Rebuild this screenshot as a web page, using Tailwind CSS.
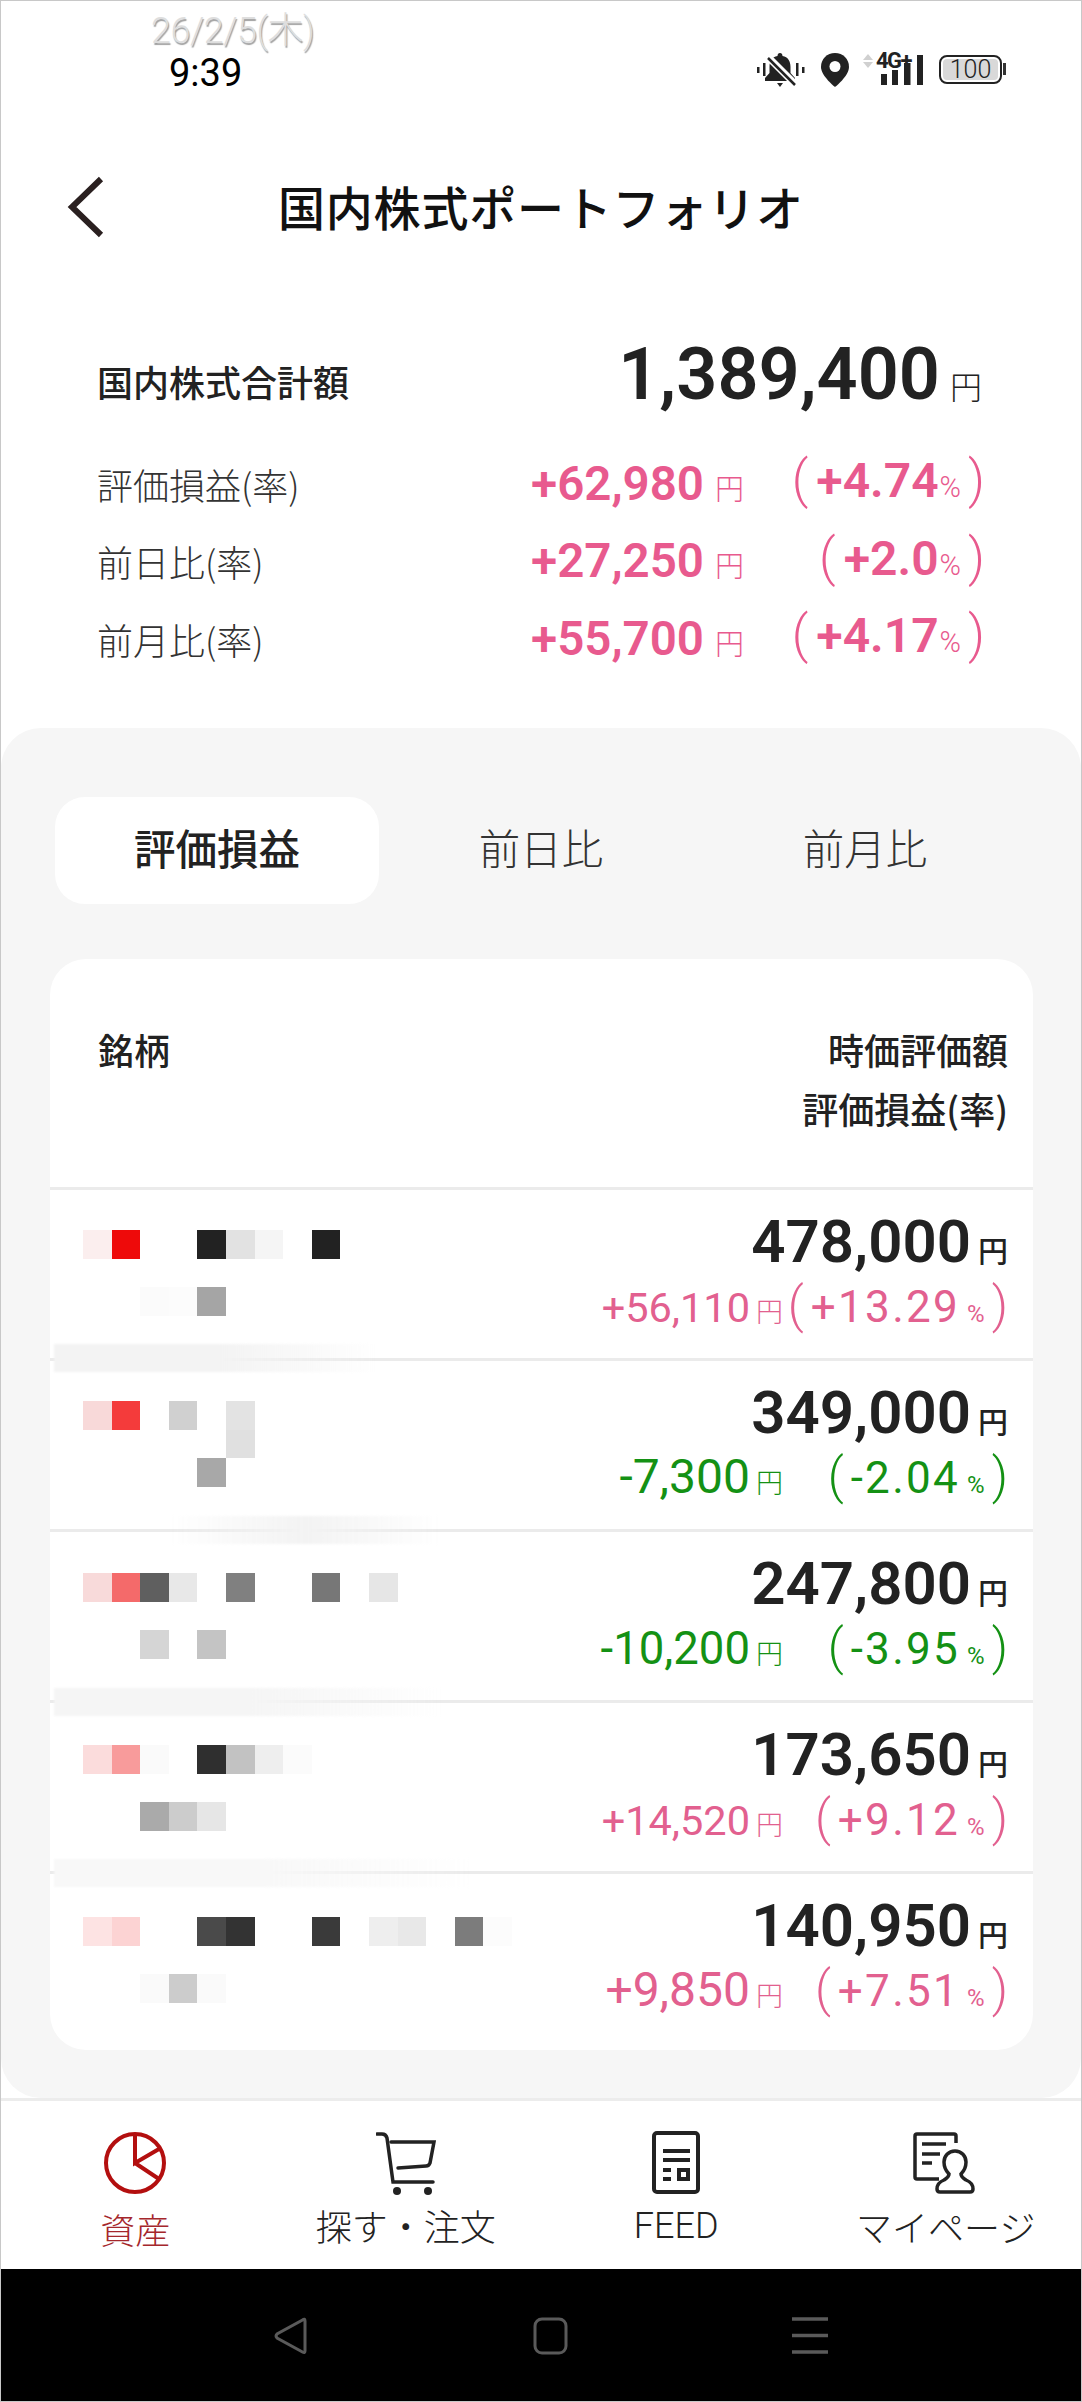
<!DOCTYPE html>
<html lang="ja">
<head>
<meta charset="utf-8">
<script src="https://cdn.jsdelivr.net/npm/@tailwindcss/browser@4"></script>
</head>
<body class="bg-white">
<div class="relative w-[1082px] h-[2402px] overflow-hidden bg-white flex flex-col font-['Roboto','Noto_Sans_CJK_JP',sans-serif] text-[#222]">

  <!-- status bar -->
  <div class="h-[150px] flex justify-between shrink-0">
    <div class="pl-[151px] pt-[9px] flex flex-col">
      <span class="text-[36px] leading-[44px] font-light tracking-[-0.5px] text-[#dedede] [text-shadow:1px_2px_1px_#a0a0a0]">26/2/5(木)</span>
      <span class="pl-[18px] text-[38px] leading-[40px] text-black">9:39</span>
    </div>
    <div class="flex items-start pt-[53px] pr-[76px]">
      <svg width="48" height="34" viewBox="0 0 48 34" fill="#222"><path d="M23 0c-1.500 0-2.500 1-2.500 3C15 4 12.500 8 12.500 14v6L8 25v3h30v-3l-4.500-5v-6c0-6-2.500-10-8-11 0-2-1-3-2.500-3z"/><path d="M20 30h6l-3 4z"/><rect x="0" y="14" width="2.500" height="6"/><rect x="6" y="10" width="2.500" height="13"/><rect x="39" y="10" width="2.500" height="13"/><rect x="45" y="14" width="2.500" height="6"/><path d="M11 4l27 27" stroke="#fff" stroke-width="7"/><path d="M11 5l27 27" stroke="#222" stroke-width="2.500"/></svg>
      <svg class="ml-[16px]" width="28" height="34" viewBox="0 0 28 34"><path fill="#222" d="M14 0C6 0 0 6 0 14c0 9 14 20 14 20s14-11 14-20C28 6 22 0 14 0z"/><circle cx="14" cy="13.500" r="5.500" fill="#fff"/></svg>
      <div class="relative ml-[14px] w-[60px] h-[34px]">
        <svg class="absolute left-0 top-0" width="60" height="34" viewBox="0 0 60 34" fill="#222"><path d="M5 1l5 6H0z" fill="#d0d0d0"/><path d="M5 15l5-6H0z" fill="#d0d0d0"/><rect x="18" y="21" width="6" height="11"/><rect x="29" y="17" width="6" height="15"/><rect x="41" y="10" width="6.500" height="22"/><rect x="54" y="2" width="6" height="30"/></svg>
        <span class="absolute left-[13px] top-[-4px] text-[22px] leading-[24px] font-bold tracking-[-1.5px]">4G+</span>
      </div>
      <div class="ml-[16px] mt-[2px] w-[63px] h-[29px] rounded-[8px] border-[2.5px] border-[#222] p-[2px] box-border">
        <div class="h-full rounded-[4px] bg-[#d9d9d9] flex items-center justify-center text-[25px] leading-none font-light">100</div>
      </div>
      <div class="ml-[1px] mt-[10px] w-[3px] h-[12px] bg-[#333]"></div>
    </div>
  </div>

  <!-- header -->
  <div class="h-[120px] shrink-0 relative flex items-center pl-[278px] pb-[8px]">
    <svg class="absolute left-[66px] top-[26px]" width="38" height="62" viewBox="0 0 38 62" fill="none" stroke="#2a2020" stroke-width="6"><path d="M35 3L6 31l29 28"/></svg>
    <h1 class="text-[47px] leading-[60px] font-medium text-[#111] tracking-[0.8px] font-['Noto_Sans_CJK_JP',sans-serif]">国内株式ポートフォリオ</h1>
  </div>

  <!-- summary -->
  <div class="h-[458px] shrink-0 pl-[97px] pr-[100px] pt-[65px]">
    <div class="flex justify-between items-center h-[80px]">
      <span class="mt-[11px] text-[36px] font-medium font-['Noto_Sans_CJK_JP',sans-serif]">国内株式合計額</span>
      <span class="flex items-baseline">
        <span class="text-[72px] leading-[80px] font-semibold">1,389,400</span>
        <span class="ml-[10px] text-[32px] font-['Noto_Sans_CJK_JP',sans-serif] font-light">円</span>
      </span>
    </div>
    <div class="mt-[30px] flex items-center h-[77.500px]">
      <span class="text-[36px] font-light text-[#333] w-[434px] font-['Noto_Sans_CJK_JP',sans-serif]">評価損益(率)</span>
      <span class="w-[213px] flex items-baseline justify-end text-[#e85a8e]"><span class="text-[47.500px] leading-[60px] font-semibold">+62,980</span><span class="ml-[11px] text-[29px] font-light font-['Noto_Sans_CJK_JP',sans-serif]">円</span></span>
      <span class="flex-1 flex items-baseline justify-end text-[#e85a8e] -mr-[3px]"><span class="text-[52px] leading-[60px] font-light">(</span><span class="ml-[8px] text-[48px] leading-[60px] font-semibold">+4.74</span><span class="ml-[1px] text-[29px] leading-[60px] font-light">%</span><span class="ml-[7px] text-[52px] leading-[60px] font-light">)</span></span>
    </div>
    <div class="flex items-center h-[77.500px]">
      <span class="text-[36px] font-light text-[#333] w-[434px] font-['Noto_Sans_CJK_JP',sans-serif]">前日比(率)</span>
      <span class="w-[213px] flex items-baseline justify-end text-[#e85a8e]"><span class="text-[47.500px] leading-[60px] font-semibold">+27,250</span><span class="ml-[11px] text-[29px] font-light font-['Noto_Sans_CJK_JP',sans-serif]">円</span></span>
      <span class="flex-1 flex items-baseline justify-end text-[#e85a8e] -mr-[3px]"><span class="text-[52px] leading-[60px] font-light">(</span><span class="ml-[8px] text-[48px] leading-[60px] font-semibold">+2.0</span><span class="ml-[1px] text-[29px] leading-[60px] font-light">%</span><span class="ml-[7px] text-[52px] leading-[60px] font-light">)</span></span>
    </div>
    <div class="flex items-center h-[77.500px]">
      <span class="text-[36px] font-light text-[#333] w-[434px] font-['Noto_Sans_CJK_JP',sans-serif]">前月比(率)</span>
      <span class="w-[213px] flex items-baseline justify-end text-[#e85a8e]"><span class="text-[47.500px] leading-[60px] font-semibold">+55,700</span><span class="ml-[11px] text-[29px] font-light font-['Noto_Sans_CJK_JP',sans-serif]">円</span></span>
      <span class="flex-1 flex items-baseline justify-end text-[#e85a8e] -mr-[3px]"><span class="text-[52px] leading-[60px] font-light">(</span><span class="ml-[8px] text-[48px] leading-[60px] font-semibold">+4.17</span><span class="ml-[1px] text-[29px] leading-[60px] font-light">%</span><span class="ml-[7px] text-[52px] leading-[60px] font-light">)</span></span>
    </div>
  </div>

  <!-- panel -->
  <div class="h-[1370px] shrink-0 mx-[1px] bg-[#f6f6f6] rounded-[40px] pt-[69px]">
    <div class="mx-[54px] flex h-[107px] font-['Noto_Sans_CJK_JP',sans-serif] text-[41.500px]">
      <div class="flex-1 rounded-[30px] bg-white flex items-center justify-center font-medium pb-[6px]">評価損益</div>
      <div class="flex-1 flex items-center justify-center font-light text-[#333] pb-[6px]">前日比</div>
      <div class="flex-1 flex items-center justify-center font-light text-[#333] pb-[6px]">前月比</div>
    </div>

    <div class="mt-[55px] ml-[49px] w-[983px] h-[1091px] bg-white rounded-[36px] overflow-hidden">
      <div class="h-[228px] pt-[61px] pl-[48px] pr-[25px] flex justify-between text-[36px] leading-[59px] font-medium font-['Noto_Sans_CJK_JP',sans-serif]">
        <span>銘柄</span>
        <span class="text-right">時価評価額<br>評価損益(率)</span>
      </div>

      <!-- row 1 -->
      <div class="relative h-[171px] box-border border-t-[3px] border-[#ebebeb] pl-[33px] pr-[25px] flex justify-between">
        <div class="mt-[40px] grid grid-cols-[repeat(15,28.600px)] grid-rows-[repeat(3,28.600px)]">
          <div class="col-start-1 row-start-1 bg-[#fbeeee]"></div>
          <div class="col-start-2 row-start-1 bg-[#ee0a0a]"></div>
          <div class="col-start-5 row-start-1 bg-[#222]"></div>
          <div class="col-start-6 row-start-1 bg-[#e2e2e2]"></div>
          <div class="col-start-7 row-start-1 bg-[#f5f5f5]"></div>
          <div class="col-start-9 row-start-1 bg-[#222]"></div>
          <div class="col-start-3 row-start-3 bg-[#fbfbfb]"></div>
          <div class="col-start-4 row-start-3 bg-[#fcfcfc]"></div>
          <div class="col-start-5 row-start-3 bg-[#a5a5a5]"></div>
        </div>
        <div class="pt-[22px] flex flex-col items-end">
          <span class="flex items-baseline"><span class="text-[60px] leading-[60px] font-semibold">478,000</span><span class="ml-[7px] text-[30px] leading-[30px] font-medium font-['Noto_Sans_CJK_JP',sans-serif]">円</span></span>
          <span class="mt-[9px] flex items-baseline text-[#e2608f]">
            <span class="flex items-baseline"><span class="text-[41.500px] leading-[48px]">+56,110</span><span class="ml-[6px] text-[27px] leading-[27px] font-light font-['Noto_Sans_CJK_JP',sans-serif]">円</span></span>
            <span class="w-[225px] flex items-baseline justify-end"><span class="text-[50px] leading-[48px] font-light">(</span><span class="ml-[7px] text-[44px] leading-[48px] tracking-[2.3px]">+13.29</span><span class="ml-[7px] text-[24px] leading-[24px]">%</span><span class="ml-[7px] text-[50px] leading-[48px] font-light">)</span></span>
          </span>
        </div>
        <div class="absolute z-10 left-[4px] top-[154px] w-[326px] h-[28px] bg-linear-to-r from-[#f3f3f3] via-[#f3f3f3] to-white/0 blur-[1px]"></div>
      </div>

      <!-- row 2 -->
      <div class="relative h-[171px] box-border border-t-[3px] border-[#ebebeb] pl-[33px] pr-[25px] flex justify-between">
        <div class="mt-[40px] grid grid-cols-[repeat(15,28.600px)] grid-rows-[repeat(3,28.600px)]">
          <div class="col-start-1 row-start-1 bg-[#f8d9d9]"></div>
          <div class="col-start-2 row-start-1 bg-[#f43b3b]"></div>
          <div class="col-start-4 row-start-1 bg-[#d0d0d0]"></div>
          <div class="col-start-6 row-start-1 bg-[#e3e3e3]"></div>
          <div class="col-start-6 row-start-2 bg-[#e0e0e0]"></div>
          <div class="col-start-5 row-start-3 bg-[#a8a8a8]"></div>
        </div>
        <div class="pt-[22px] flex flex-col items-end">
          <span class="flex items-baseline"><span class="text-[60px] leading-[60px] font-semibold">349,000</span><span class="ml-[7px] text-[30px] leading-[30px] font-medium font-['Noto_Sans_CJK_JP',sans-serif]">円</span></span>
          <span class="mt-[9px] flex items-baseline text-[#149114]">
            <span class="flex items-baseline"><span class="text-[48px] leading-[48px]">-7,300</span><span class="ml-[6px] text-[27px] leading-[27px] font-light font-['Noto_Sans_CJK_JP',sans-serif]">円</span></span>
            <span class="w-[225px] flex items-baseline justify-end"><span class="text-[50px] leading-[48px] font-light">(</span><span class="ml-[7px] text-[44px] leading-[48px] tracking-[2.3px]">-2.04</span><span class="ml-[7px] text-[24px] leading-[24px]">%</span><span class="ml-[7px] text-[50px] leading-[48px] font-light">)</span></span>
          </span>
        </div>
        <div class="absolute z-10 left-[120px] top-[155px] w-[270px] h-[28px] bg-linear-to-r from-white/0 via-[#f3f3f3] to-white/0 blur-[1px]"></div>
      </div>

      <!-- row 3 -->
      <div class="relative h-[171px] box-border border-t-[3px] border-[#ebebeb] pl-[33px] pr-[25px] flex justify-between">
        <div class="mt-[41px] grid grid-cols-[repeat(15,28.600px)] grid-rows-[repeat(3,28.600px)]">
          <div class="col-start-1 row-start-1 bg-[#f8dada]"></div>
          <div class="col-start-2 row-start-1 bg-[#f46a6a]"></div>
          <div class="col-start-3 row-start-1 bg-[#5f5f5f]"></div>
          <div class="col-start-4 row-start-1 bg-[#e8e8e8]"></div>
          <div class="col-start-6 row-start-1 bg-[#808080]"></div>
          <div class="col-start-9 row-start-1 bg-[#777]"></div>
          <div class="col-start-11 row-start-1 bg-[#e6e6e6]"></div>
          <div class="col-start-3 row-start-3 bg-[#d5d5d5]"></div>
          <div class="col-start-5 row-start-3 bg-[#c4c4c4]"></div>
        </div>
        <div class="pt-[22px] flex flex-col items-end">
          <span class="flex items-baseline"><span class="text-[60px] leading-[60px] font-semibold">247,800</span><span class="ml-[7px] text-[30px] leading-[30px] font-medium font-['Noto_Sans_CJK_JP',sans-serif]">円</span></span>
          <span class="mt-[9px] flex items-baseline text-[#149114]">
            <span class="flex items-baseline"><span class="text-[45.500px] leading-[48px]">-10,200</span><span class="ml-[6px] text-[27px] leading-[27px] font-light font-['Noto_Sans_CJK_JP',sans-serif]">円</span></span>
            <span class="w-[225px] flex items-baseline justify-end"><span class="text-[50px] leading-[48px] font-light">(</span><span class="ml-[7px] text-[44px] leading-[48px] tracking-[2.3px]">-3.95</span><span class="ml-[7px] text-[24px] leading-[24px]">%</span><span class="ml-[7px] text-[50px] leading-[48px] font-light">)</span></span>
          </span>
        </div>
        <div class="absolute z-10 left-[4px] top-[156px] w-[390px] h-[28px] bg-linear-to-r from-[#f5f5f5] via-[#f5f5f5] to-white/0 blur-[1px]"></div>
      </div>

      <!-- row 4 -->
      <div class="relative h-[171px] box-border border-t-[3px] border-[#ebebeb] pl-[33px] pr-[25px] flex justify-between">
        <div class="mt-[42px] grid grid-cols-[repeat(15,28.600px)] grid-rows-[repeat(3,28.600px)]">
          <div class="col-start-1 row-start-1 bg-[#fbdcdc]"></div>
          <div class="col-start-2 row-start-1 bg-[#f89b9b]"></div>
          <div class="col-start-3 row-start-1 bg-[#fafafa]"></div>
          <div class="col-start-5 row-start-1 bg-[#2f2f2f]"></div>
          <div class="col-start-6 row-start-1 bg-[#c2c2c2]"></div>
          <div class="col-start-7 row-start-1 bg-[#eee]"></div>
          <div class="col-start-8 row-start-1 bg-[#fbfbfb]"></div>
          <div class="col-start-3 row-start-3 bg-[#aaa]"></div>
          <div class="col-start-4 row-start-3 bg-[#ccc]"></div>
          <div class="col-start-5 row-start-3 bg-[#e6e6e6]"></div>
        </div>
        <div class="pt-[22px] flex flex-col items-end">
          <span class="flex items-baseline"><span class="text-[60px] leading-[60px] font-semibold">173,650</span><span class="ml-[7px] text-[30px] leading-[30px] font-medium font-['Noto_Sans_CJK_JP',sans-serif]">円</span></span>
          <span class="mt-[9px] flex items-baseline text-[#e2608f]">
            <span class="flex items-baseline"><span class="text-[41.500px] leading-[48px]">+14,520</span><span class="ml-[6px] text-[27px] leading-[27px] font-light font-['Noto_Sans_CJK_JP',sans-serif]">円</span></span>
            <span class="w-[225px] flex items-baseline justify-end"><span class="text-[50px] leading-[48px] font-light">(</span><span class="ml-[7px] text-[44px] leading-[48px] tracking-[2.3px]">+9.12</span><span class="ml-[7px] text-[24px] leading-[24px]">%</span><span class="ml-[7px] text-[50px] leading-[48px] font-light">)</span></span>
          </span>
        </div>
        <div class="absolute z-10 left-[4px] top-[156px] w-[420px] h-[28px] bg-linear-to-r from-[#f8f8f8] via-[#f8f8f8] to-white/0 blur-[1px]"></div>
      </div>

      <!-- row 5 -->
      <div class="relative h-[179px] box-border border-t-[3px] border-[#ebebeb] pl-[33px] pr-[25px] flex justify-between">
        <div class="mt-[43px] grid grid-cols-[repeat(15,28.600px)] grid-rows-[repeat(3,28.600px)]">
          <div class="col-start-1 row-start-1 bg-[#fde3e3]"></div>
          <div class="col-start-2 row-start-1 bg-[#fcd3d3]"></div>
          <div class="col-start-5 row-start-1 bg-[#4a4a4a]"></div>
          <div class="col-start-6 row-start-1 bg-[#333]"></div>
          <div class="col-start-9 row-start-1 bg-[#3a3a3a]"></div>
          <div class="col-start-11 row-start-1 bg-[#eee]"></div>
          <div class="col-start-12 row-start-1 bg-[#e8e8e8]"></div>
          <div class="col-start-14 row-start-1 bg-[#7c7c7c]"></div>
          <div class="col-start-15 row-start-1 bg-[#fcfcfc]"></div>
          <div class="col-start-3 row-start-3 bg-[#fafafa]"></div>
          <div class="col-start-4 row-start-3 bg-[#ccc]"></div>
          <div class="col-start-5 row-start-3 bg-[#fafafa]"></div>
        </div>
        <div class="pt-[22px] flex flex-col items-end">
          <span class="flex items-baseline"><span class="text-[60px] leading-[60px] font-semibold">140,950</span><span class="ml-[7px] text-[30px] leading-[30px] font-medium font-['Noto_Sans_CJK_JP',sans-serif]">円</span></span>
          <span class="mt-[9px] flex items-baseline text-[#e2608f]">
            <span class="flex items-baseline"><span class="text-[48px] leading-[48px]">+9,850</span><span class="ml-[6px] text-[27px] leading-[27px] font-light font-['Noto_Sans_CJK_JP',sans-serif]">円</span></span>
            <span class="w-[225px] flex items-baseline justify-end"><span class="text-[50px] leading-[48px] font-light">(</span><span class="ml-[7px] text-[44px] leading-[48px] tracking-[2.3px]">+7.51</span><span class="ml-[7px] text-[24px] leading-[24px]">%</span><span class="ml-[7px] text-[50px] leading-[48px] font-light">)</span></span>
          </span>
        </div>
      </div>
    </div>
  </div>

  <!-- bottom tab bar -->
  <div class="h-[171px] shrink-0 border-t-[3px] border-[#ececec] box-border grid grid-cols-4 pt-[29px] font-['Noto_Sans_CJK_JP',sans-serif] text-[36px] font-light text-[#222]">
    <div class="flex flex-col items-center">
      <svg width="66" height="66" viewBox="0 0 66 66" fill="none" stroke="#b30f0f" stroke-width="4"><circle cx="33" cy="33" r="29"/><path d="M33 4V33L57 19M33 33L57 49"/></svg>
      <span class="mt-[11px] text-[35px] leading-[44px] text-[#a5272c]">資産</span>
    </div>
    <div class="flex flex-col items-center">
      <svg width="60" height="66" viewBox="0 0 60 66" fill="none" stroke="#222" stroke-width="3.500" stroke-linecap="round"><path d="M1 4h5q4 0 5 4l6 44H57"/><path d="M15 12H58L54 33q-1 3-4 3L22 38"/><circle cx="21" cy="61" r="4" fill="#222" stroke="none"/><circle cx="52" cy="61" r="4" fill="#222" stroke="none"/></svg>
      <span class="mt-[7px] leading-[44px]">探す・注文</span>
    </div>
    <div class="flex flex-col items-center">
      <svg width="48" height="66" viewBox="0 0 48 66" fill="none" stroke="#222" stroke-width="4"><rect x="2" y="3" width="44" height="59" rx="3"/><path d="M11 21H38M11 30H38M11 40H19M11 49H19"/><rect x="27" y="40" width="9" height="9"/></svg>
      <span class="mt-[8px] leading-[44px] font-['Roboto',sans-serif]">FEED</span>
    </div>
    <div class="flex flex-col items-center pr-[2px]">
      <svg class="ml-[-2px]" width="64" height="66" viewBox="0 0 64 66" fill="none" stroke="#222" stroke-width="3.500"><path d="M43 13V6q0-2-2-2H4q-2 0-2 2V47q0 2 2 2H26"/><path d="M9 14H33M9 24H27M9 33H19"/><path d="M42 21c-6.500 0-11 5-11 11 0 5 2 9 5 12 0 3-2 4-5 6-5 2-7 5-7 9 0 2 1 3 3 3h30c2 0 3-1 3-3 0-4-2-7-7-9-3-2-5-3-5-6 3-3 5-7 5-12 0-6-4.500-11-11-11z"/></svg>
      <span class="mt-[8px] leading-[44px]">マイページ</span>
    </div>
  </div>

  <!-- android nav -->
  <div class="flex-1 bg-black flex items-start pt-[48px]">
    <svg class="ml-[274px]" width="34" height="38" viewBox="0 0 34 38" fill="none" stroke="#5a5a5a" stroke-width="3"><path d="M31 4q0-3-2.500-1L3 17q-2 2 0 4l25.500 14q2.500 1.500 2.500-1z"/></svg>
    <svg class="ml-[225px]" width="36" height="38" viewBox="0 0 36 38" fill="none" stroke="#5a5a5a" stroke-width="3"><rect x="2" y="2" width="31" height="34" rx="7"/></svg>
    <svg class="ml-[222px]" width="38" height="38" viewBox="0 0 38 38" fill="none" stroke="#5a5a5a" stroke-width="3.500"><path d="M1 2H37M1 18.500H37M1 35H37"/></svg>
  </div>

  <!-- screenshot frame -->
  <div class="absolute inset-0 border border-[#c8c8c8] pointer-events-none z-20"></div>
</div>
</body>
</html>
